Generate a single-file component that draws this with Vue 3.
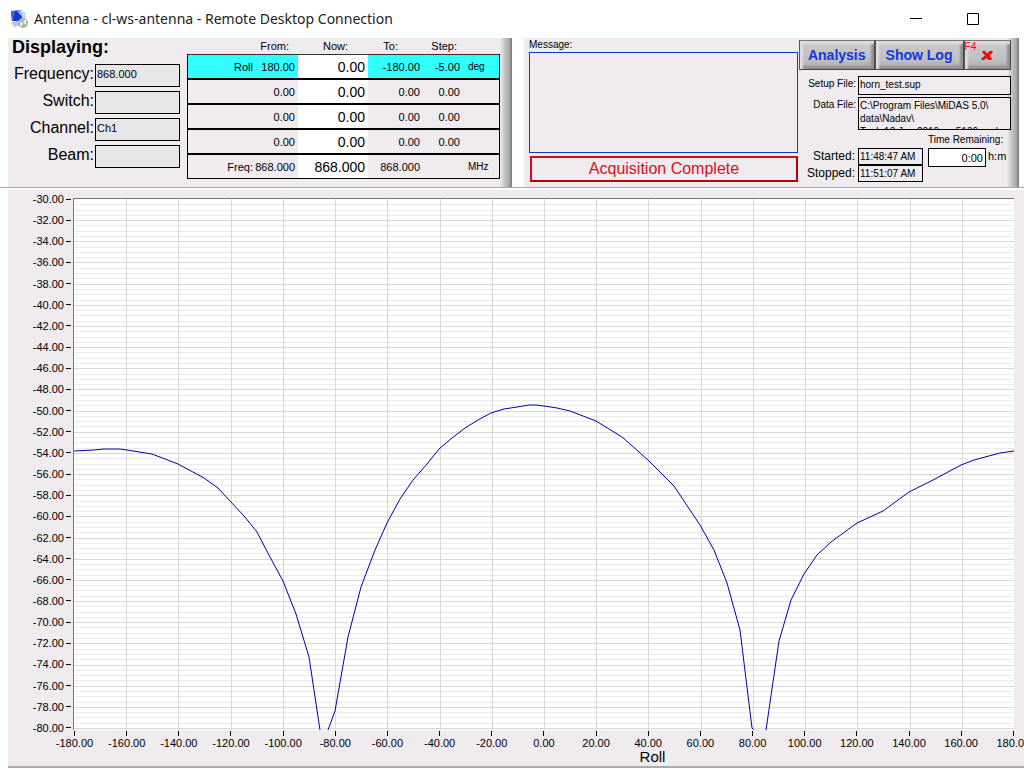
<script setup>
const fields = [
  { id: 'frequency', label: 'Frequency:', value: '868.000' },
  { id: 'switch', label: 'Switch:', value: '' },
  { id: 'channel', label: 'Channel:', value: 'Ch1' },
  { id: 'beam', label: 'Beam:', value: '' }
]

const axes = [
  { name: 'Roll', from: '180.00', now: '0.00', to: '-180.00', step: '-5.00', unit: 'deg', active: true },
  { name: '', from: '0.00', now: '0.00', to: '0.00', step: '0.00', unit: '' },
  { name: '', from: '0.00', now: '0.00', to: '0.00', step: '0.00', unit: '' },
  { name: '', from: '0.00', now: '0.00', to: '0.00', step: '0.00', unit: '' },
  { name: 'Freq:', from: '868.000', now: '868.000', to: '868.000', step: '', unit: 'MHz' }
]

const yLabels = Array.from({ length: 26 }, (_, i) => (-30 - i * 2).toFixed(2))
const xLabels = Array.from({ length: 19 }, (_, i) => (-180 + i * 20).toFixed(2))

const plotWidth = 940
const plotHeight = 531
const rowLines = Array.from({ length: 100 }, (_, i) => ({
  y: Math.round(((i + 1) * 529) / 100) + 0.5,
  major: (i + 1) % 4 === 0
}))
const columnLines = Array.from({ length: 17 }, (_, i) => Math.round(((i + 1) * plotWidth) / 18) + 0.5)

const traces = [
  '0,252 20,251 30,250 46,250 53,251 78,255 104,265 130,279 144,289 156,302 170,317 183,333 196,358 209,382 222,415 235,458 246,531',
  '254,531 261,512 274,438 287,388 301,351 313,324 326,300 339,281 353,265 365,250 378,239 391,229 404,221 417,214 430,210 443,208 455,206 462,206 470,207 483,209 496,212 522,222 548,238 574,261 600,287 626,326 640,351 653,384 666,431 678,529 680,531',
  '692,531 705,442 717,401 730,375 743,356 757,343 783,324 809,312 835,293 861,280 887,266 900,261 926,254 940,252'
]
</script>

<template>
  <div class="window">
    <header class="titlebar">
      <svg class="app-icon" viewBox="0 0 20 20" aria-hidden="true">
        <path d="M2 2 L12 1 L14 12 L3 12 Z" fill="#1636c8" />
        <path d="M2 2 L6 2 L4 12 L3 12 Z" fill="#3f66dc" />
        <path d="M8 2 L12 1 L13 8 Z" fill="#8fb4f5" />
        <path d="M2 13 L9 12 L12 16 L5 18 Z" fill="#b9c6d6" />
        <path d="M12 2 L16 3 L17 12 L14 12 Z" fill="#c9d3df" />
        <circle cx="14" cy="14" r="5" fill="#aab4ac" />
        <path d="M11 13 L13 15 L11 17 M17 11 L15 13 L17 15" fill="none" stroke="#fff" stroke-width="1.4" />
      </svg>
      <h1>Antenna - cl-ws-antenna - Remote Desktop Connection</h1>
      <div class="window-buttons">
        <button type="button" aria-label="Minimize">
          <svg viewBox="0 0 12 12"><path d="M0 5.5 H12" /></svg>
        </button>
        <button type="button" aria-label="Maximize">
          <svg viewBox="0 0 12 12"><path d="M0.5 0.5 H11.5 V11.5 H0.5 Z" /></svg>
        </button>
      </div>
    </header>

    <div class="panels">
      <section class="panel display-panel">
        <div class="display">
          <h2>Displaying:</h2>
          <div v-for="f in fields" :key="f.id" class="field">
            <label :for="f.id">{{ f.label }}</label>
            <input :id="f.id" type="text" :value="f.value" readonly />
          </div>
        </div>
        <table class="axes">
          <colgroup>
            <col class="c-name" /><col class="c-from" /><col class="c-now" /><col class="c-to" /><col class="c-step" /><col />
          </colgroup>
          <thead>
            <tr>
              <th></th>
              <th class="h-from">From:</th>
              <th class="h-now">Now:</th>
              <th class="h-to">To:</th>
              <th class="h-step">Step:</th>
              <th></th>
            </tr>
          </thead>
          <tbody>
            <tr v-for="(a, i) in axes" :key="i" :class="{ active: a.active }">
              <td>{{ a.name }}</td>
              <td>{{ a.from }}</td>
              <td class="now">{{ a.now }}</td>
              <td>{{ a.to }}</td>
              <td>{{ a.step }}</td>
              <td class="unit">{{ a.unit }}</td>
            </tr>
          </tbody>
        </table>
      </section>

      <section class="panel status-panel">
        <div class="messages">
          <label for="message">Message:</label>
          <textarea id="message" readonly></textarea>
          <output>Acquisition Complete</output>
        </div>
        <div class="controls">
          <div class="buttons">
            <button type="button" class="analysis">Analysis</button>
            <button type="button" class="log">Show Log</button>
            <button type="button" class="close" aria-label="F4 Close">
              <span>F4</span>
              <svg viewBox="0 0 12 12" aria-hidden="true">
                <path d="M1 1 L4 1 L6 4 L9 1 L12 1 L12 3 L9 6 L11 9 L11 11 L8 11 L5 9 L3 11 L0 11 L0 9 L4 6 L1 3 Z" fill="#e01010" />
              </svg>
            </button>
          </div>
          <div class="file">
            <label for="setup">Setup File:</label>
            <input id="setup" type="text" value="horn_test.sup" readonly />
          </div>
          <div class="file data">
            <span id="data-label">Data File:</span>
            <div class="path" aria-labelledby="data-label">C:\Program Files\MiDAS 5.0\<br />data\Nadav\<br />Tuck 10 Jun 2019 &nbsp;m 5100 &nbsp;m /</div>
          </div>
          <div class="times">
            <div class="clock">
              <label for="started">Started:</label>
              <input id="started" type="text" value="11:48:47 AM" readonly />
              <label for="stopped">Stopped:</label>
              <input id="stopped" type="text" value="11:51:07 AM" readonly />
            </div>
            <div class="remaining">
              <label for="remaining">Time Remaining:</label>
              <div><input id="remaining" type="text" value="0:00" readonly /><span>h:m</span></div>
            </div>
          </div>
        </div>
      </section>
    </div>

    <main class="chart">
      <div class="y-axis">
        <div v-for="y in yLabels" :key="y"><span>{{ y }}</span></div>
      </div>
      <div class="plot">
        <svg :viewBox="`0 0 ${plotWidth} ${plotHeight}`" preserveAspectRatio="none" role="img" aria-label="Level against roll">
          <g shape-rendering="crispEdges">
            <line v-for="l in rowLines" :key="'r' + l.y" x1="0" :x2="plotWidth" :y1="l.y" :y2="l.y" :class="l.major ? 'major' : 'minor'" />
            <line v-for="x in columnLines" :key="'c' + x" :x1="x" :x2="x" y1="0" :y2="plotHeight" class="major" />
          </g>
          <polyline v-for="(t, i) in traces" :key="i" :points="t" class="trace" />
        </svg>
      </div>
      <div class="x-axis">
        <div v-for="x in xLabels" :key="x"><span>{{ x }}</span></div>
      </div>
      <div class="x-title">Roll</div>
    </main>
  </div>
</template>

<style>
html,
body,
#app {
  height: 100%;
}
body {
  margin: 0;
  overflow: hidden;
}
</style>

<style scoped>
* {
  box-sizing: border-box;
}
.window {
  display: flex;
  flex-direction: column;
  height: 100%;
  background: #fff;
  color: #000;
  font: 11px/12px "Liberation Sans", Arial, sans-serif;
}
input,
textarea,
button {
  font: inherit;
  color: inherit;
  margin: 0;
  border-radius: 0;
  min-width: 0;
}
.titlebar {
  display: flex;
  align-items: center;
  height: 38px;
  padding: 0 45px 1px 9px;
}
.app-icon {
  width: 20px;
  height: 20px;
  margin-right: 5px;
}
h1 {
  flex: 1;
  margin: 0;
  font: 400 14px/20px "Noto Sans", "Open Sans", sans-serif;
  color: #222;
}
.window-buttons {
  display: flex;
  gap: 45px;
}
.window-buttons button {
  display: flex;
  padding: 0;
  border: 0;
  background: none;
}
.window-buttons svg {
  width: 12px;
  height: 12px;
  fill: none;
  stroke: #000;
}
.panels {
  display: flex;
  gap: 12px;
  height: 150px;
  padding: 0 5px 0 8px;
  border-bottom: 1px solid #aaa;
}
.panel {
  display: flex;
  background: linear-gradient(to left, #777 0, #aaa 3px, #c4c2c4 7px, #efebef 12px);
}
.display-panel {
  flex: 504 1 0;
}
.status-panel {
  flex: 495 1 0;
}
.display {
  width: 172px;
  padding-left: 4px;
}
h2 {
  margin: 0 0 7px;
  font: 700 18px/19px "Liberation Sans", Arial, sans-serif;
}
.field {
  display: flex;
  justify-content: flex-end;
  gap: 1px;
  height: 23px;
  margin-bottom: 4px;
}
.field label {
  font-size: 16px;
  line-height: 20px;
}
.field input {
  width: 85px;
  padding: 0 0 4px 1px;
  border: 1px solid #000;
  background: #e7e7e7;
}
.axes {
  flex: 1;
  align-self: flex-start;
  margin: 0 12px 0 7px;
  border-spacing: 0;
  table-layout: fixed;
}
.c-name { width: 66px; }
.c-from { width: 45px; }
.c-now { width: 70px; }
.c-to { width: 52px; }
.c-step { width: 40px; }
.axes th,
.axes td {
  padding: 0;
  text-align: right;
  font-weight: 400;
}
.axes th {
  height: 16px;
}
.axes .h-from { padding-right: 9px; }
.axes .h-now { padding-right: 20px; }
.axes .h-to { padding-right: 22px; }
.axes .h-step { padding-right: 3px; }
.axes td {
  height: 25px;
  border-bottom: 2px solid #000;
}
.axes td:nth-child(2) {
  padding-right: 3px;
}
.axes td:first-child {
  border-left: 1px solid #000;
}
.axes td:last-child {
  border-right: 1px solid #000;
}
.axes tr:first-child td {
  height: 26px;
  border-top: 1px solid #333;
}
.axes tr:last-child td {
  height: 24px;
  border-bottom-width: 1px;
}
.axes .active td {
  background: #31ffff;
}
.axes td.now {
  padding-right: 3px;
  background: #fff;
  font-size: 14px;
}
.axes td.unit {
  padding-left: 8px;
  text-align: left;
  font-size: 10px;
}
.messages {
  display: flex;
  flex: 1;
  flex-direction: column;
  padding-left: 5px;
  font-size: 10px;
}
.messages label {
  height: 14px;
  line-height: 14px;
}
.messages textarea {
  height: 101px;
  padding: 2px;
  border: 1px solid #1038c6;
  background: #efebef;
  resize: none;
  outline: 0;
}
.messages output {
  margin: 3px 0 0 1px;
  border: 2px solid #d01018;
  border-right-color: #b00;
  border-bottom-color: #b00;
  color: #d6101c;
  font-size: 16px;
  line-height: 22px;
  text-align: center;
}
.controls {
  width: 221px;
  padding: 2px 8px 0 1px;
  font-size: 10px;
}
.buttons {
  display: flex;
  height: 30px;
}
.buttons button {
  padding: 0;
  border: 1px solid;
  border-color: #777 #444 #444 #555;
  background: linear-gradient(#cecbce, #c0bec0 70%, #a8a6a8);
  box-shadow: inset 3px 3px 2px #dedcde, inset -3px -3px 2px #909090;
  color: #1038de;
  font-size: 14px;
  font-weight: 700;
}
.buttons .analysis { flex: 76; }
.buttons .log { flex: 90; }
.buttons .close {
  display: flex;
  flex: 47;
  color: #e01010;
  font-size: 10px;
  font-weight: 400;
  line-height: 12px;
}
.close svg {
  width: 12px;
  height: 11px;
  margin: 9px 0 0 5px;
}
.file {
  display: flex;
  justify-content: flex-end;
  gap: 2px;
  margin-top: 6px;
  line-height: 16px;
}
.file input,
.path {
  width: 153px;
  height: 19px;
  padding: 0 1px 2px;
  border: 1px solid #000;
  background: #efebef;
}
.file.data {
  margin-top: 2px;
}
.path {
  height: 33px;
  padding: 1px;
  line-height: 13px;
  overflow: hidden;
}
.times {
  display: flex;
  gap: 5px;
  padding: 4px 0 0 5px;
}
.clock {
  display: grid;
  grid-template-columns: 1fr 65px;
  gap: 0 3px;
  flex: 1;
  padding-top: 14px;
  font-size: 12px;
  text-align: right;
}
.clock label {
  line-height: 17px;
}
.clock input {
  height: 17px;
  padding: 0 1px 1px;
  border: 1px solid #000;
  background: #efebef;
  font-size: 10px;
}
.remaining {
  width: 83px;
}
.remaining label {
  display: block;
  height: 14px;
}
.remaining div {
  display: flex;
  gap: 2px;
  font-size: 11px;
  line-height: 17px;
}
.remaining input {
  width: 58px;
  height: 19px;
  padding: 0 2px;
  border: 1px solid #000;
  background: #fff;
  text-align: right;
}
.chart {
  display: grid;
  flex: 1;
  grid-template: 1fr 21px 14px / 65px 1fr;
  min-height: 0;
  margin: 2px 0 1px 8px;
  padding: 8px 10px 1px 0;
  border-bottom: 2px solid #aaa;
  background: #efebef;
}
.y-axis {
  display: flex;
  flex-direction: column;
  justify-content: space-between;
  padding: 1px 2px 2px 0;
}
.y-axis div {
  display: flex;
  align-items: center;
  justify-content: flex-end;
  gap: 2px;
  height: 0;
}
.y-axis div::after {
  content: "";
  width: 5px;
  height: 1px;
  background: #000;
}
.plot {
  min-height: 0;
  border-top: 1px solid #777;
  border-left: 1px solid #777;
  background: #fff;
}
.plot svg {
  display: block;
  width: 100%;
  height: 100%;
}
.plot line,
.plot polyline {
  vector-effect: non-scaling-stroke;
}
.major {
  stroke: #d8d8d8;
}
.minor {
  stroke: #ececec;
}
.trace {
  fill: none;
  stroke: #0000a8;
}
.x-axis {
  display: flex;
  grid-column: 2;
  justify-content: space-between;
  padding: 1px 0 0 1px;
}
.x-axis div {
  display: flex;
  flex-direction: column;
  align-items: center;
  width: 1px;
}
.x-axis div::before {
  content: "";
  width: 1px;
  height: 5px;
  background: #000;
}
.x-axis span {
  line-height: 14px;
}
.x-title {
  grid-column: 2;
  padding-left: 218px;
  font-size: 15px;
  line-height: 12px;
  text-align: center;
}
</style>
